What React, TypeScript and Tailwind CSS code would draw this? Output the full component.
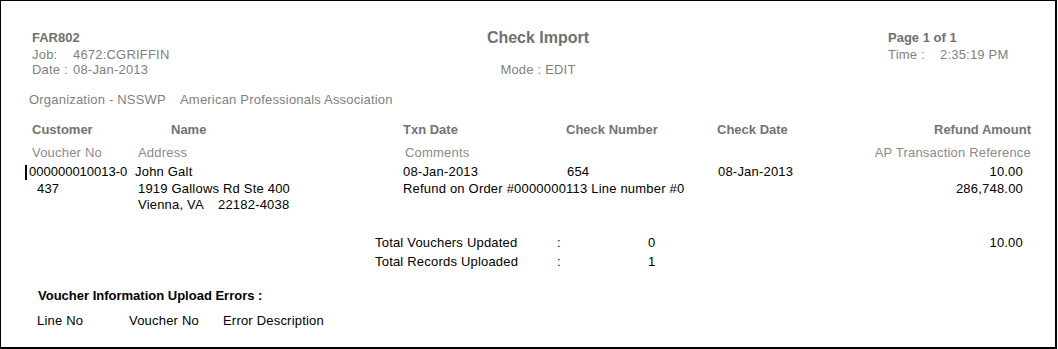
import * as React from "react";

// check import report preview: header, voucher rows, totals and upload errors
const voucher = {
  customer: "000000010013-0",
  voucherNo: "437",
  name: "John Galt",
  street: "1919 Gallows Rd Ste 400",
  city: "Vienna, VA",
  zip: "22182-4038",
  txnDate: "08-Jan-2013",
  comment: "Refund on Order #0000000113 Line number #0",
  checkNumber: "654",
  checkDate: "08-Jan-2013",
  amount: "10.00",
  apReference: "286,748.00",
};

export default function App() {
  return (
    <div className="w-[1057px] h-[349px] bg-white border-l border-t border-r-2 border-b-2 border-black font-['Liberation_Sans',Arial,sans-serif] text-[13px] leading-[16px] tracking-[0.2px] text-black overflow-hidden">
      {/* report header */}
      <div className="flex pl-[31px] pt-[29px]">
        <div className="w-[406px] text-[#7f7f7f]">
          <div className="h-[17px] font-bold tracking-normal text-[#707070]">FAR802</div>
          <div className="h-[15px] flex">
            <span className="w-[41px]">Job:</span>
            <span>4672:CGRIFFIN</span>
          </div>
          <div className="h-[16px] flex">
            <span className="w-[41px]">Date :</span>
            <span>08-Jan-2013</span>
          </div>
        </div>
        <div className="w-[200px] text-center text-[#7f7f7f]">
          <div className="-mt-[2px] h-[20px] text-[16px] leading-[20px] font-bold tracking-normal text-[#707070]">
            Check Import
          </div>
          <div className="mt-[14px]">Mode : EDIT</div>
        </div>
        <div className="ml-[250px] text-[#7f7f7f]">
          <div className="h-[17px] font-bold tracking-normal text-[#707070]">Page 1 of 1</div>
          <div className="flex">
            <span className="w-[52px]">Time :</span>
            <span>2:35:19 PM</span>
          </div>
        </div>
      </div>

      <div className="mt-[14px] pl-[28px] flex text-[#7f7f7f]">
        <span className="w-[151px]">Organization - NSSWP</span>
        <span>American Professionals Association</span>
      </div>

      {/* column headings */}
      <div className="mt-[14px] pl-[31px] pr-[24px] flex font-bold tracking-normal text-[#737373]">
        <span className="w-[139px]">Customer</span>
        <span className="w-[232px]">Name</span>
        <span className="w-[163px]">Txn Date</span>
        <span className="w-[151px]">Check Number</span>
        <span className="flex-1">Check Date</span>
        <span>Refund Amount</span>
      </div>
      <div className="mt-[7px] pl-[31px] pr-[24px] flex text-[#8a8a8a]">
        <span className="w-[106px]">Voucher No</span>
        <span className="w-[267px]">Address</span>
        <span className="flex-1">Comments</span>
        <span>AP Transaction Reference</span>
      </div>

      {/* voucher rows */}
      <div className="mt-[3px] pl-[24px] pr-[32px] flex">
        <span className="w-[110px] flex items-center tracking-normal">
          <span className="inline-block w-[2px] h-[15px] bg-black mr-[2px]" />
          {voucher.customer}
        </span>
        <span className="w-[268px]">{voucher.name}</span>
        <span className="w-[164px]">{voucher.txnDate}</span>
        <span className="w-[151px]">{voucher.checkNumber}</span>
        <span className="flex-1">{voucher.checkDate}</span>
        <span>{voucher.amount}</span>
      </div>
      <div className="mt-[1px] pl-[36px] pr-[32px] flex">
        <span className="w-[101px]">{voucher.voucherNo}</span>
        <span className="w-[265px]">{voucher.street}</span>
        <span className="flex-1">{voucher.comment}</span>
        <span>{voucher.apReference}</span>
      </div>
      <div className="pl-[137px] flex">
        <span className="w-[80px]">{voucher.city}</span>
        <span>{voucher.zip}</span>
      </div>

      {/* totals */}
      <div className="mt-[22px] pl-[374px] pr-[32px] flex">
        <span className="w-[182px]">Total Vouchers Updated</span>
        <span className="w-[91px]">:</span>
        <span className="flex-1">0</span>
        <span>10.00</span>
      </div>
      <div className="mt-[3px] pl-[374px] flex">
        <span className="w-[182px]">Total Records Uploaded</span>
        <span className="w-[91px]">:</span>
        <span>1</span>
      </div>

      {/* upload errors */}
      <div className="mt-[18px] pl-[37px] font-bold tracking-normal">
        Voucher Information Upload Errors :
      </div>
      <div className="mt-[9px] pl-[36px] flex">
        <span className="w-[92px]">Line No</span>
        <span className="w-[94px]">Voucher No</span>
        <span>Error Description</span>
      </div>
    </div>
  );
}
